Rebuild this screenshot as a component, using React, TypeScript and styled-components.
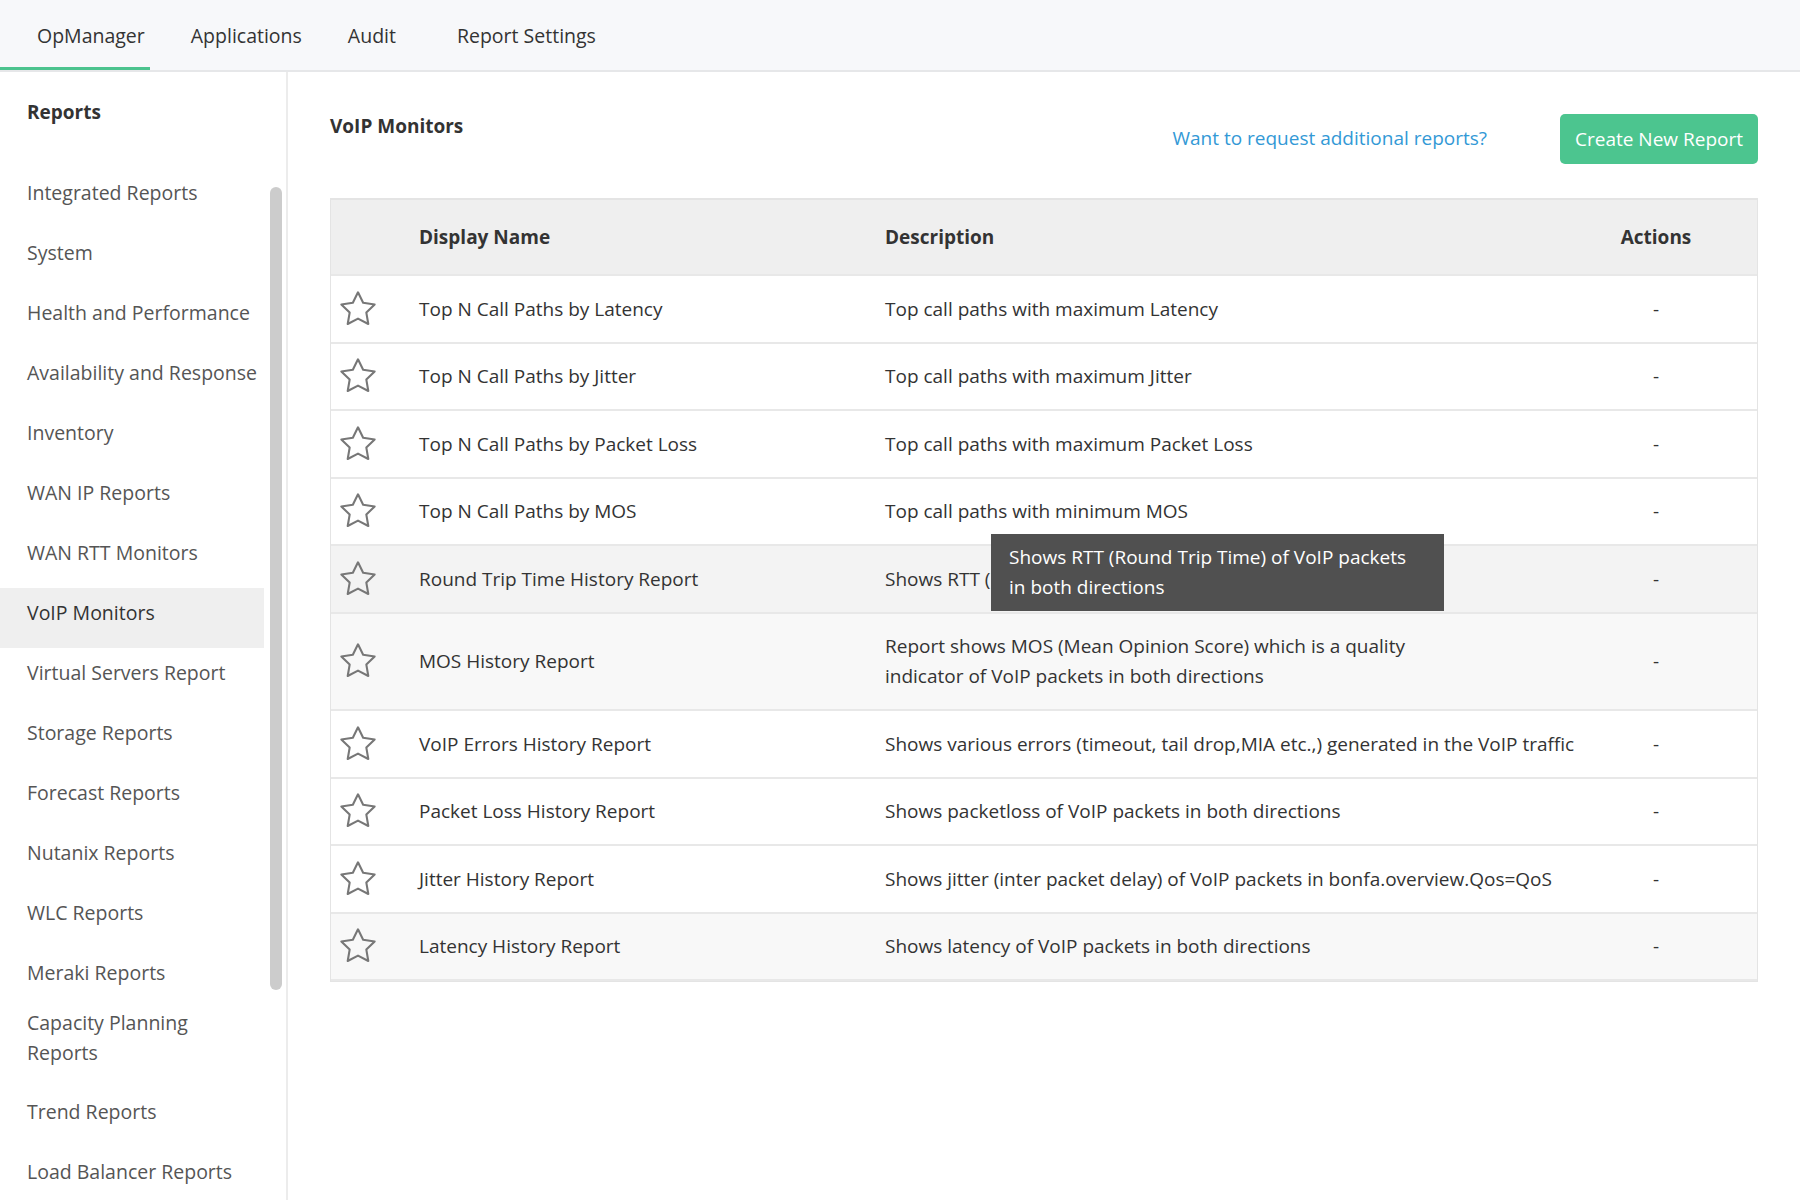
import React from "react";
import styled, { createGlobalStyle } from "styled-components";

const GlobalStyle = createGlobalStyle`
  html, body { margin: 0; padding: 0; background: #ffffff; }
  body { font-family: "Open Sans", Lato, "Liberation Sans", sans-serif; color: #333; }
  * { box-sizing: border-box; }
`;

const Page = styled.div`
  display: flex;
  flex-direction: column;
  min-height: 100vh;
  overflow: hidden;
`;

const TopNav = styled.nav`
  display: flex;
  align-items: stretch;
  height: 72px;
  padding-left: 14px;
  background: #f7f8fa;
  border-bottom: 2px solid #e6e7e9;
`;

const Tab = styled.div<{ $active?: boolean; $extra?: number }>`
  position: relative;
  display: flex;
  align-items: center;
  padding: 0 23px;
  margin-left: ${(p) => p.$extra ?? 0}px;
  font-size: 19.5px;
  color: #333;
  height: 70px;
  &::after {
    content: "";
    display: ${(p) => (p.$active ? "block" : "none")};
    position: absolute;
    left: -14px;
    right: 18px;
    bottom: 0;
    height: 3px;
    background: #4cc38e;
  }
`;

const Body = styled.div`
  display: flex;
  flex: 1;
`;

const Sidebar = styled.aside`
  position: relative;
  width: 288px;
  flex-shrink: 0;
  border-right: 2px solid #ececec;
  padding-top: 28px;
  min-height: 1128px;
`;

const SideTitle = styled.div`
  padding-left: 27px;
  font-size: 19px;
  font-weight: 700;
  line-height: 24px;
  color: #333;
  margin-bottom: 44px;
`;

const SideList = styled.ul`
  list-style: none;
  margin: 0;
  padding: 0;
  width: 264px;
`;

const SideItem = styled.li<{ $selected?: boolean; $multi?: boolean }>`
  padding: ${(p) => (p.$multi ? "0 40px 19px 27px" : "10px 0 20px 27px")};
  font-size: 19.5px;
  line-height: 30px;
  color: ${(p) => (p.$selected ? "#333" : "#555")};
  background: ${(p) => (p.$selected ? "#efefef" : "transparent")};
`;

const ScrollThumb = styled.div`
  position: absolute;
  left: 270px;
  top: 115px;
  width: 12px;
  height: 803px;
  border-radius: 6px;
  background: #cccccc;
`;

const Main = styled.main`
  flex: 1;
  padding: 42px 42px 0 42px;
`;

const HeaderRow = styled.div`
  display: flex;
  align-items: flex-start;
  height: 50px;
  margin-bottom: 34px;
`;

const PageTitle = styled.h1`
  margin: 0;
  font-size: 19px;
  font-weight: 700;
  line-height: 24px;
  color: #333;
  flex: 1;
`;

const RequestLink = styled.a`
  align-self: center;
  font-size: 19px;
  color: #3399d6;
  text-decoration: none;
  margin-right: 73px;
  margin-top: -2px;
`;

const PrimaryButton = styled.button`
  height: 50px;
  width: 198px;
  border: none;
  border-radius: 5px;
  background: #4cc58f;
  color: #fff;
  font-family: inherit;
  font-size: 19px;
  padding: 0;
`;

const TableWrap = styled.div`
  position: relative;
  width: 1428px;
  border: 1px solid #e4e4e4;
  border-top-width: 2px;
`;

const GridRow = styled.div<{ $bg?: string; $head?: boolean }>`
  display: grid;
  grid-template-columns: 88px 466px 1fr 176px;
  align-items: center;
  background: ${(p) => p.$bg ?? "#fff"};
  border-bottom: 2px solid #e8e8e8;
  min-height: ${(p) => (p.$head ? "76px" : "67.5px")};
  font-size: 19px;
  line-height: 30px;
  color: #333;
  font-weight: ${(p) => (p.$head ? 700 : 400)};
`;

const Cell = styled.div<{ $narrow?: boolean }>`
  padding: 17.75px 0;
  max-width: ${(p) => (p.$narrow ? "560px" : "none")};
`;

const StarCell = styled.div`
  display: flex;
  align-items: center;
  padding-left: 7px;
`;

const ActionCell = styled.div`
  text-align: center;
  padding-right: 26px;
`;

const Tooltip = styled.div`
  position: absolute;
  left: 660px;
  top: 334px;
  width: 453px;
  padding: 8px 30px 9px 18px;
  background: #505050;
  color: #fff;
  font-size: 19px;
  line-height: 30px;
`;

const StarIcon = () => (
  <svg width="40" height="40" viewBox="0 0 24 24" fill="none">
    <polygon
      points="12,2 15.09,8.26 22,9.27 17,14.14 18.18,21.02 12,17.77 5.82,21.02 7,14.14 2,9.27 8.91,8.26"
      stroke="#777"
      strokeWidth="1.25"
      strokeLinejoin="round"
    />
  </svg>
);

const sideItems = [
  "Integrated Reports",
  "System",
  "Health and Performance",
  "Availability and Response",
  "Inventory",
  "WAN IP Reports",
  "WAN RTT Monitors",
  "VoIP Monitors",
  "Virtual Servers Report",
  "Storage Reports",
  "Forecast Reports",
  "Nutanix Reports",
  "WLC Reports",
  "Meraki Reports",
  "Capacity Planning Reports",
  "Trend Reports",
  "Load Balancer Reports",
];

type Row = { name: string; desc: string; bg?: string; narrow?: boolean };

const rows: Row[] = [
  { name: "Top N Call Paths by Latency", desc: "Top call paths with maximum Latency" },
  { name: "Top N Call Paths by Jitter", desc: "Top call paths with maximum Jitter" },
  { name: "Top N Call Paths by Packet Loss", desc: "Top call paths with maximum Packet Loss" },
  { name: "Top N Call Paths by MOS", desc: "Top call paths with minimum MOS" },
  {
    name: "Round Trip Time History Report",
    desc: "Shows RTT (Round Trip Time) of VoIP packets in both directions",
    bg: "#f3f3f3",
  },
  {
    name: "MOS History Report",
    desc: "Report shows MOS (Mean Opinion Score) which is a quality indicator of VoIP packets in both directions",
    bg: "#f8f8f8",
    narrow: true,
  },
  {
    name: "VoIP Errors History Report",
    desc: "Shows various errors (timeout, tail drop,MIA etc.,) generated in the VoIP traffic",
  },
  { name: "Packet Loss History Report", desc: "Shows packetloss of VoIP packets in both directions" },
  {
    name: "Jitter History Report",
    desc: "Shows jitter (inter packet delay) of VoIP packets in bonfa.overview.Qos=QoS",
  },
  { name: "Latency History Report", desc: "Shows latency of VoIP packets in both directions", bg: "#f8f8f8" },
];

export default function App() {
  return (
    <Page>
      <GlobalStyle />
      <TopNav>
        <Tab $active>OpManager</Tab>
        <Tab>Applications</Tab>
        <Tab>Audit</Tab>
        <Tab $extra={15}>Report Settings</Tab>
      </TopNav>
      <Body>
        <Sidebar>
          <SideTitle>Reports</SideTitle>
          <SideList>
            {sideItems.map((s) => (
              <SideItem
                key={s}
                $selected={s === "VoIP Monitors"}
                $multi={s === "Capacity Planning Reports"}
              >
                {s}
              </SideItem>
            ))}
          </SideList>
          <ScrollThumb />
        </Sidebar>
        <Main>
          <HeaderRow>
            <PageTitle>VoIP Monitors</PageTitle>
            <RequestLink href="#">Want to request additional reports?</RequestLink>
            <PrimaryButton>Create New Report</PrimaryButton>
          </HeaderRow>
          <TableWrap>
            <GridRow $head $bg="#efefef">
              <div />
              <div>Display Name</div>
              <div>Description</div>
              <ActionCell>Actions</ActionCell>
            </GridRow>
            {rows.map((r) => (
              <GridRow key={r.name} $bg={r.bg}>
                <StarCell>
                  <StarIcon />
                </StarCell>
                <Cell>{r.name}</Cell>
                <Cell $narrow={r.narrow}>{r.desc}</Cell>
                <ActionCell>-</ActionCell>
              </GridRow>
            ))}
            <Tooltip>Shows RTT (Round Trip Time) of VoIP packets in both directions</Tooltip>
          </TableWrap>
        </Main>
      </Body>
    </Page>
  );
}
